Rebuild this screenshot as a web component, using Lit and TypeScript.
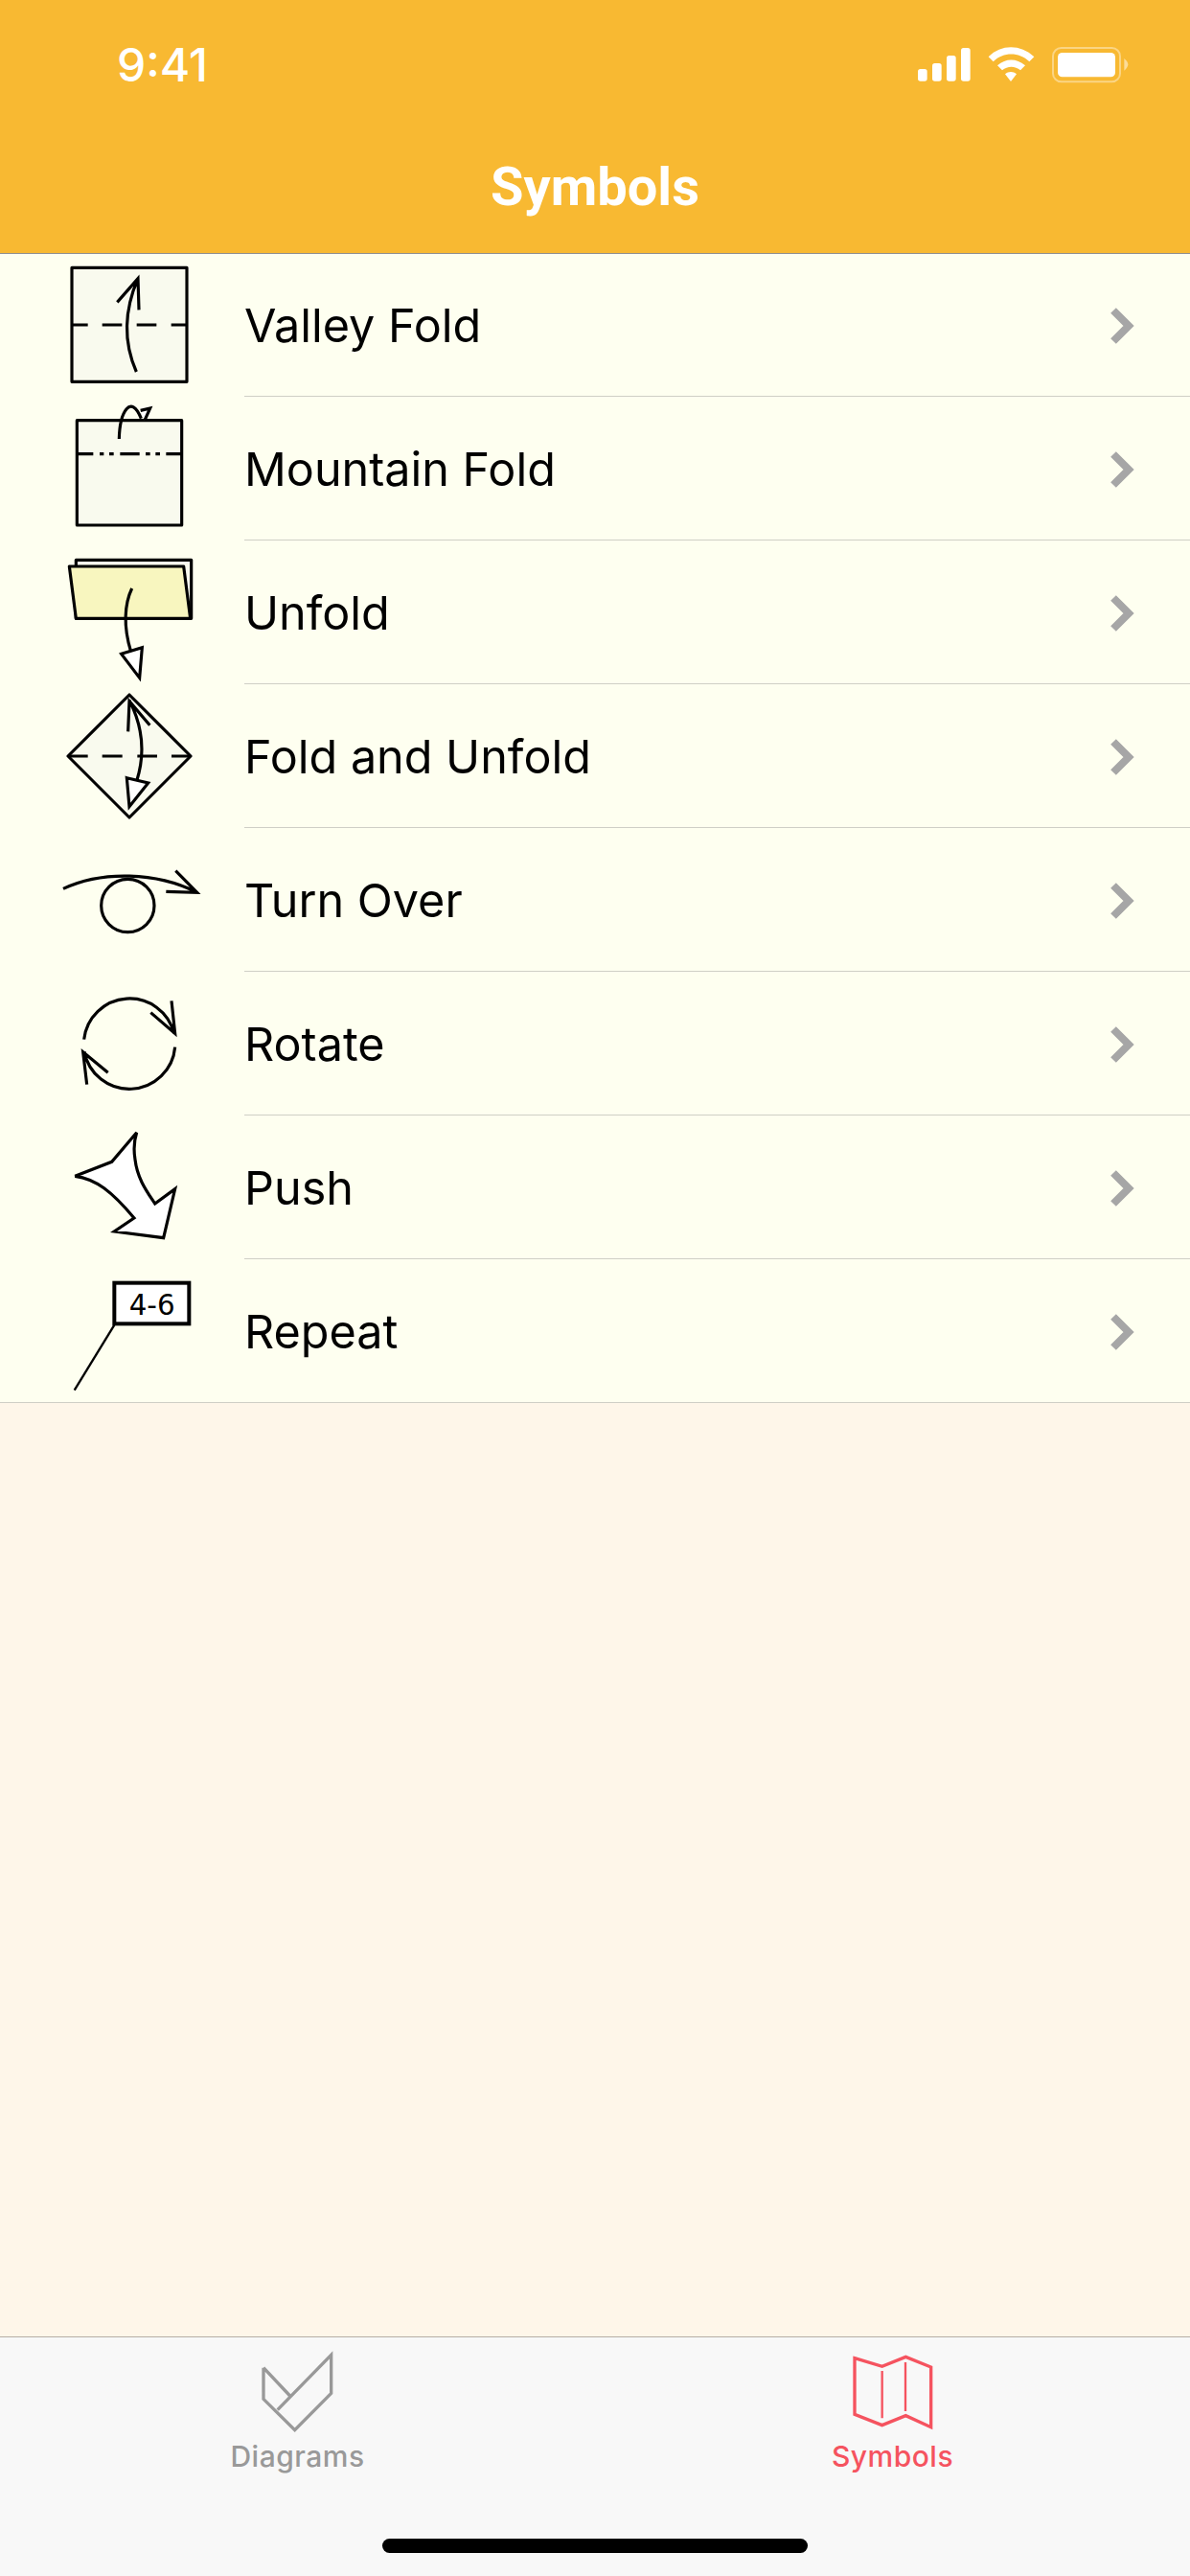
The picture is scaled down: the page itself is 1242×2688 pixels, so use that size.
import { LitElement, html, css, svg } from "lit";
import { customElement } from "lit/decorators.js";

const icons = [
  svg`<rect class="paper" x="105" y="58" width="360" height="357"/>
    <path class="s" d="M105 237H155M200 237H262M308 237H370M416 237H462"/>
    <path class="s" d="M307 384C270 300 265 200 312 92M247 166L312 92L315 190"/>`,
  svg`<rect class="paper" x="121" y="536" width="328" height="328"/>
    <path class="s" d="M121 641H172M192 641H205M222 641H236M256 641H317M336 641H350M367 641H381M400 641H449"/>
    <path class="s" d="M253 594C255 510 290 450 322 530"/>
    <path class="w" d="M320 505L350 498L333 536"/>`,
  svg`<path class="paper" d="M118 92V73H479V256H118Z"/>
    <path class="yellow" d="M97 93H455L476 256H118Z"/>
    <path class="s" d="M293 162C270 210 265 280 290 360"/>
    <path class="w" d="M260 367L325 347L317 442Z"/>`,
  svg`<path class="paper" d="M285 495L477 687L285 879L93 687Z"/>
    <path class="s" d="M93 687H155M200 687H263M310 687H372M417 687H477"/>
    <path class="s" d="M285 512C330 600 335 680 308 765M281 610L285 515L349 590"/>
    <path class="w" d="M277 755L344 771L285 845Z"/>`,
  svg`<circle class="s" cx="280" cy="255" r="83"/>
    <path class="s" d="M78 202C200 145 370 150 495 213M430 146L497 214L400 211"/>`,
  svg`<path class="s" d="M143 674A143.5 143.5 0 0 1 425 655M352 590L428 655L417 553"/>
    <path class="s" d="M428 698A143.5 143.5 0 0 1 144 712M218 778L140 713L152 815"/>`,
  svg`<path class="w" d="M308 65L230 157L115 202C180 210 230 250 300 333L238 375L392 395L428 242L365 288C340 250 310 210 303 150C298 120 300 90 308 65Z"/>`,
  svg`<rect class="w thick" x="238" y="536" width="234" height="128"/>
    <text class="num" x="356" y="637" text-anchor="middle">4-6</text>
    <path class="s thin" d="M238 668L113 872"/>`,
];

const items = ["Valley Fold", "Mountain Fold", "Unfold", "Fold and Unfold", "Turn Over", "Rotate", "Push", "Repeat"];

@customElement("app-root")
export class AppRoot extends LitElement {
  static styles = css`
    :host { display: flex; flex-direction: column; width: 1242px; height: 2688px; background: #fef6e9; font-family: Inter, "Liberation Sans", sans-serif; overflow: hidden; }
    .nav { height: 264px; flex: none; background: #f8b932; color: #fff; position: relative; z-index: 1; }
    .nav::after { content: ""; position: absolute; left: 0; right: 0; bottom: -1px; height: 1px; background: #8f8f8f; }
    .status { height: 132px; display: flex; justify-content: space-between; align-items: flex-start; }
    .time { font-size: 48px; font-weight: 500; line-height: 56px; margin: 40px 0 0 122px; }
    .status svg { width: 260px; height: 70px; margin: 30px 42px 0 0; }
    .title { height: 132px; display: flex; justify-content: center; font: 700 56px/132px Roboto, sans-serif; margin-top: -3px; }
    .list { background: #fefff0; display: flex; flex-direction: column; flex: none; }
    .row { height: 150px; display: flex; box-sizing: border-box; flex: none; }
    .row.last { border-bottom: 1px solid #cfcfc6; }
    .ico { width: 255px; flex: none; box-sizing: border-box; padding-left: 40px; height: 150px; }
    .ico svg { width: 215px; height: 150px; display: block; overflow: visible; }
    .body { flex: 1; display: flex; align-items: center; justify-content: space-between; padding-right: 54px; padding-top: 2px; box-sizing: border-box; border-bottom: 1px solid #cfcfc6; font-size: 48.5px; color: #000; }
    .row.last .body { border-bottom: none; }
    .chev { width: 32px; height: 44px; }
    .chev path { fill: none; stroke: #a6a6a6; stroke-width: 8; }
    .paper { fill: #f9faee; stroke: #000; stroke-width: 9.5; stroke-linejoin: round; }
    .yellow { fill: #f8f6bf; stroke: #000; stroke-width: 9.5; stroke-linejoin: round; }
    .s { fill: none; stroke: #000; stroke-width: 9.5; }
    .w { fill: #fff; stroke: #000; stroke-width: 9.5; }
    .thick { stroke-width: 12; }
    .thin { stroke-width: 7; }
    .num { font: 88px "DejaVu Sans", sans-serif; fill: #000; }
    .spacer { flex: 1; }
    .tabs { height: 250px; flex: none; background: #f8f8f8; border-top: 1px solid #b5aea6; box-sizing: border-box; display: flex; position: relative; }
    .tab { flex: 1; display: flex; flex-direction: column; align-items: center; padding-top: 11px; font-size: 30px; font-weight: 500; line-height: 36px; letter-spacing: 0.5px; color: #999; }
    .tab.on { color: #f5535f; }
    .tab svg { width: 160px; height: 90px; display: block; margin-bottom: 5px; }
    .tab path { fill: none; stroke: currentColor; stroke-width: 10; }
    .tab path.fine { stroke-width: 7; }
    .home { position: absolute; left: 399px; width: 444px; bottom: 24px; height: 15px; border-radius: 8px; background: #000; }
  `;

  render() {
    return html`
      <div class="nav">
        <div class="status">
          <span class="time">9:41</span>
          <svg viewBox="0 0 780 210">
            <g fill="#fff">
              <rect x="54" y="126" width="29" height="38" rx="8"/>
              <rect x="99" y="108" width="29" height="56" rx="8"/>
              <rect x="144" y="84" width="29" height="80" rx="8"/>
              <rect x="189" y="60" width="29" height="104" rx="8"/>
              <path d="M275 88C315 48 375 48 418 88L403 103C370 72 322 72 290 103Z"/>
              <path d="M303 115C330 92 362 92 390 115L375 130C358 116 335 116 318 130Z"/>
              <path d="M327 142C338 133 352 133 363 142L345 165Z"/>
              <rect x="492" y="75" width="180" height="76" rx="14"/>
              <path d="M700 93C708 100 712 106 712 112C712 118 708 124 700 131Z" fill-opacity=".5"/>
            </g>
            <rect x="477" y="60" width="210" height="106" rx="26" fill="none" stroke="#fff" stroke-opacity=".4" stroke-width="6"/>
          </svg>
        </div>
        <div class="title">Symbols</div>
      </div>
      <div class="list">
        ${items.map((t, i) => html`
          <div class="row ${i === items.length - 1 ? "last" : ""}">
            <div class="ico"><svg viewBox="0 ${i % 2 ? 462 : 12} 645 450">${icons[i]}</svg></div>
            <div class="body">
              <span>${t}</span>
              <svg class="chev" viewBox="0 0 32 44"><path d="M6 6L22 22L6 38"/></svg>
            </div>
          </div>`)}
      </div>
      <div class="spacer"></div>
      <div class="tabs">
        <div class="tab">
          <svg viewBox="90 90 480 270"><path d="M222 152V250L320 347L434 232V112L266 284M222 152L305 240"/></svg>
          <span>Diagrams</span>
        </div>
        <div class="tab on">
          <svg viewBox="64 90 480 270"><path d="M184 122L270 148L344 118L423 150V338L344 302L270 332L184 298Z"/><path class="fine" d="M270 162V310M343 135V288"/></svg>
          <span>Symbols</span>
        </div>
        <div class="home"></div>
      </div>
    `;
  }
}
